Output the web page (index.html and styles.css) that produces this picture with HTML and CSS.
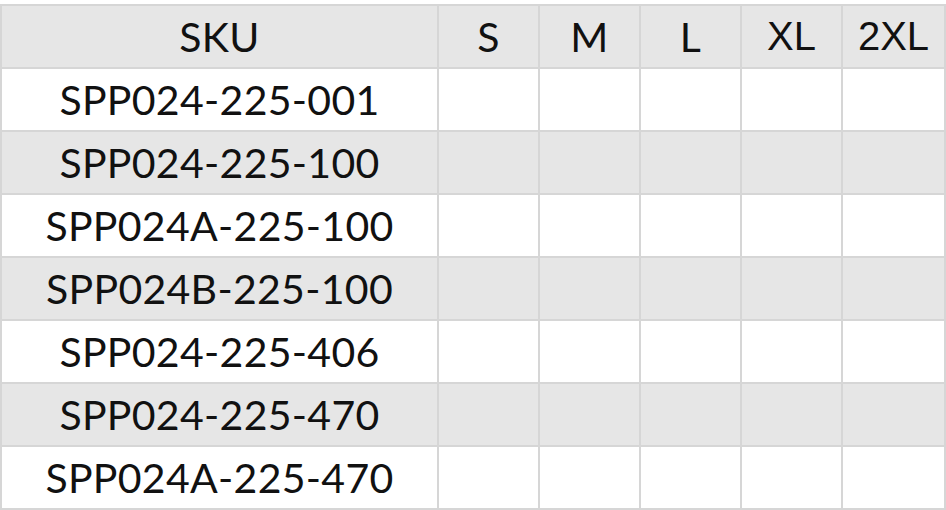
FILE: index.html
```html
<!DOCTYPE html>
<html>
<head>
<meta charset="utf-8">
<link rel="stylesheet" href="styles.css">
</head>
<body>
<table class="sizes">
  <thead>
    <tr class="head">
      <th class="sku">SKU</th>
      <th class="size">S</th>
      <th class="size">M</th>
      <th class="size">L</th>
      <th class="size alt">XL</th>
      <th class="size alt last">2XL</th>
    </tr>
  </thead>
  <tbody>
    <tr class="odd"><td class="sku">SPP024-225-001</td><td></td><td></td><td></td><td></td><td></td></tr>
    <tr class="even"><td class="sku">SPP024-225-100</td><td></td><td></td><td></td><td></td><td></td></tr>
    <tr class="odd"><td class="sku">SPP024A-225-100</td><td></td><td></td><td></td><td></td><td></td></tr>
    <tr class="even"><td class="sku">SPP024B-225-100</td><td></td><td></td><td></td><td></td><td></td></tr>
    <tr class="odd"><td class="sku">SPP024-225-406</td><td></td><td></td><td></td><td></td><td></td></tr>
    <tr class="even"><td class="sku">SPP024-225-470</td><td></td><td></td><td></td><td></td><td></td></tr>
    <tr class="odd"><td class="sku">SPP024A-225-470</td><td></td><td></td><td></td><td></td><td></td></tr>
  </tbody>
</table>
</body>
</html>
```
FILE: styles.css
```css
html, body {
  margin: 0;
  padding: 0;
  background: #ffffff;
}
.sizes {
  border-collapse: collapse;
  table-layout: fixed;
  margin: 4px 0 0 0;
  width: 945px;
  font-family: "Lato", "Liberation Sans", sans-serif;
  font-size: 41px;
  letter-spacing: 0.3px;
  color: #111;
}
.sizes th, .sizes td {
  border: 2px solid #d6d6d6;
  height: 63px;
  padding: 0;
  text-align: center;
  font-weight: 400;
  box-sizing: border-box;
}
.sizes th.sku, .sizes td.sku { width: 437px; }
.sizes th.size { width: 101px; }
.sizes th.last { width: 103px; }
.head { background: #e6e6e6; }
.even { background: #e6e6e6; }
.odd { background: #ffffff; }
.sizes th.alt {
  font-family: "Liberation Sans", Arial, sans-serif;
  font-size: 40px;
  letter-spacing: 0;
}
```
